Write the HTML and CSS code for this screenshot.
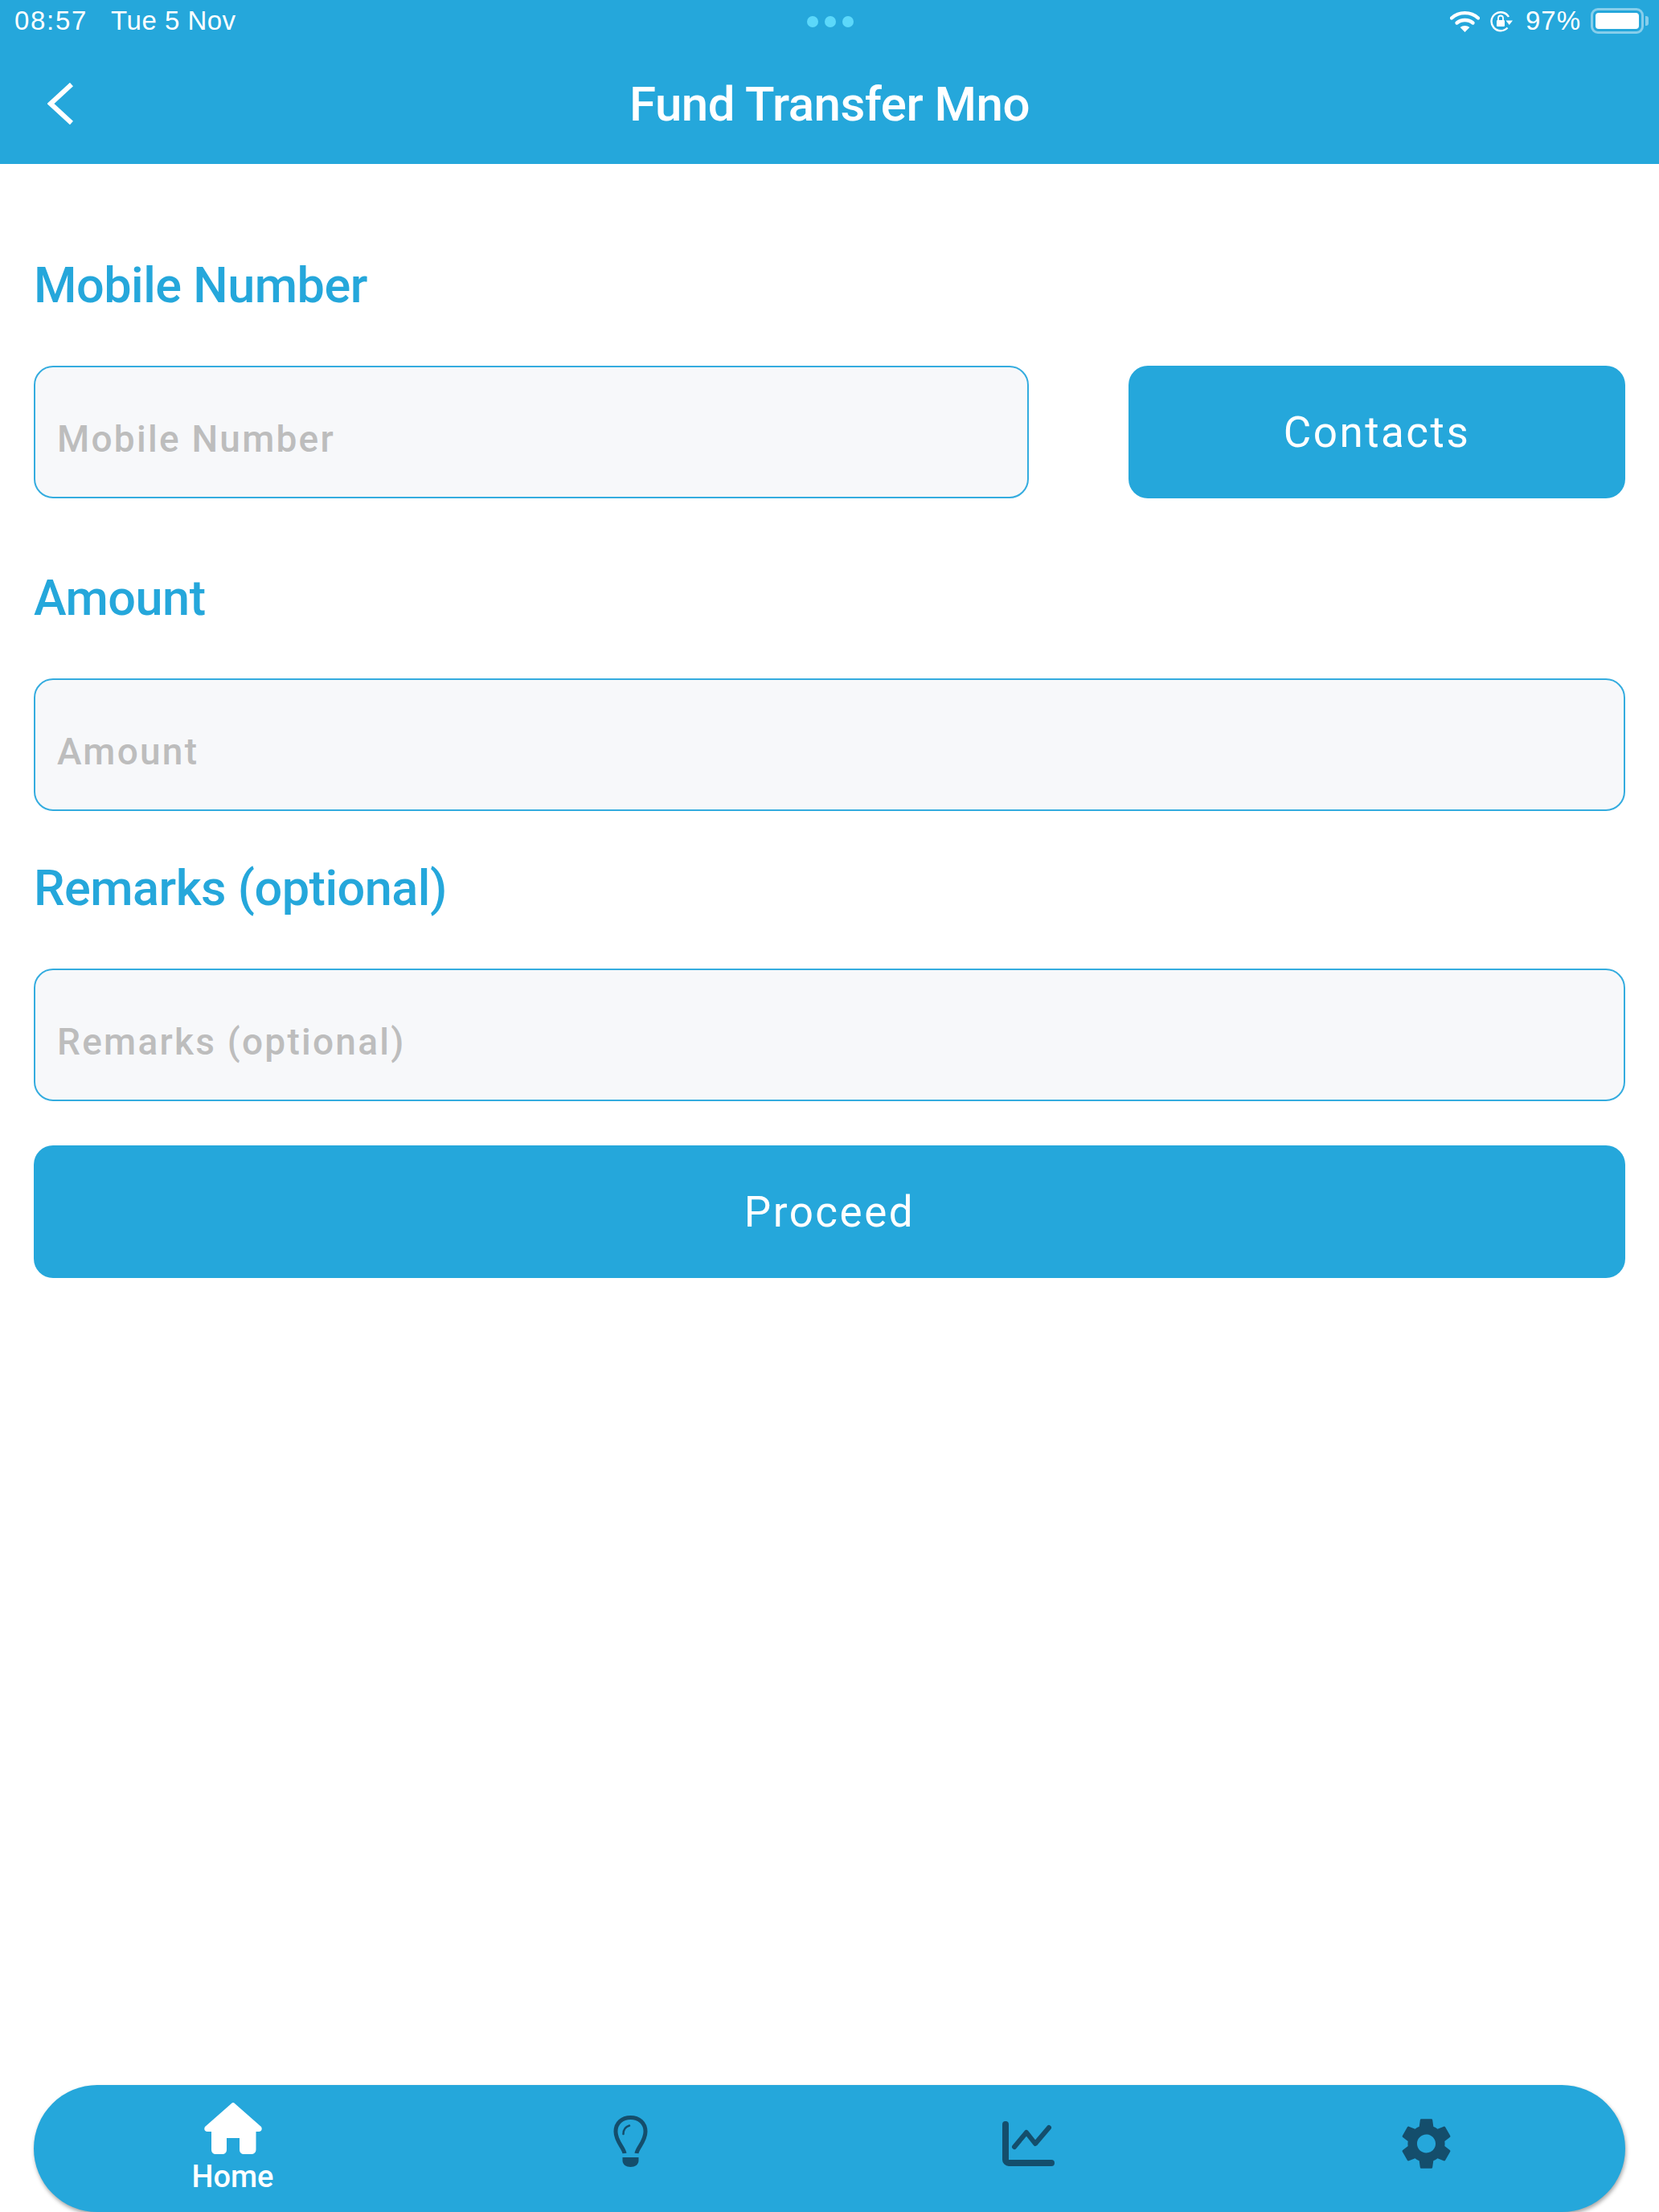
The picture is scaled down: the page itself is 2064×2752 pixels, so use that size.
FILE: index.html
```html
<!DOCTYPE html>
<html lang="en">
<head>
<meta charset="utf-8">
<title>Fund Transfer Mno</title>
<link rel="stylesheet" href="styles.css">
</head>
<body>
<div class="app">
  <header class="header">
    <div class="status">
      <div class="status-left"><span class="time">08:57</span><span class="date">Tue 5 Nov</span></div>
      <div class="dots"><i></i><i></i><i></i></div>
      <div class="status-right">
        <svg class="ic-wifi" viewBox="0 0 37 27"><path d="M2 9.5C11 1 26 1 35 9.5" fill="none" stroke="#fff" stroke-width="4.4" stroke-linecap="round"/><path d="M8.5 15.5C14 10.8 23 10.8 28.5 15.5" fill="none" stroke="#fff" stroke-width="4.4" stroke-linecap="round"/><path d="M18.5 27L12.6 21C15.8 18.2 21.2 18.2 24.4 21Z" fill="#fff"/></svg>
        <svg class="ic-rot" viewBox="0 0 28 27"><path d="M21.5 21.5A11.5 11.5 0 1 1 23 8" fill="none" stroke="#fff" stroke-width="2.4"/><path d="M19.5 12.5H28L23.7 18Z" fill="#fff"/><rect x="8" y="12" width="10" height="8" rx="1.2" fill="#fff"/><path d="M10 12V9.5a3 3 0 0 1 6 0V12" fill="none" stroke="#fff" stroke-width="1.8"/></svg>
        <span class="pct">97%</span>
        <div class="battery"><div class="battery-fill"></div></div>
        <div class="battery-nub"></div>
      </div>
    </div>
    <div class="titlebar">
      <svg class="ic-back" viewBox="0 0 32 52"><path d="M30 2L4 26L30 50" fill="none" stroke="#fff" stroke-width="6"/></svg>
      <h1 class="title">Fund Transfer Mno</h1>
    </div>
  </header>

  <main class="form">
    <section class="field field-first">
      <h2 class="label">Mobile Number</h2>
      <div class="row">
        <div class="input input-grow">Mobile Number</div>
        <button class="btn btn-contacts">Contacts</button>
      </div>
    </section>
    <section class="field">
      <h2 class="label">Amount</h2>
      <div class="input">Amount</div>
    </section>
    <section class="field field-last">
      <h2 class="label">Remarks (optional)</h2>
      <div class="input">Remarks (optional)</div>
    </section>
    <button class="btn btn-proceed">Proceed</button>
  </main>

  <nav class="nav">
    <div class="nav-item">
      <svg class="ic-home" viewBox="0 0 72 64"><path d="M36 0C37 0 38 .6 38.6 1.5L71 30C72.800 33 71 36 68 36H64.500V58C64.500 62 62 64 58 64H50C46 64 44 62 44 58V44H28V58C28 62 26 64 22 64H15C11 64 9 62 9 58V36H4C1 36-.8 33 1 30L33.400 1.500C34 .6 35 0 36 0Z" fill="#fff"/></svg>
      <span class="nav-label">Home</span>
    </div>
    <div class="nav-item">
      <svg class="ic-bulb" viewBox="0 0 43 64"><path d="M14 47C13 40 3 32 3 20C3 9 11 2.500 21.500 2.500S40 9 40 20C40 32 30 40 29 47" fill="none" stroke="#144E6C" stroke-width="5"/><path d="M12.500 23C12.500 18 15 14 20 12.500" fill="none" stroke="#144E6C" stroke-width="2.500" stroke-linecap="round"/><path d="M11.500 52H31.500V56C31.500 61 27 64 21.500 64S11.500 61 11.500 56Z" fill="#144E6C"/></svg>
    </div>
    <div class="nav-item">
      <svg class="ic-chart" viewBox="0 0 65 56"><path d="M4 4V48C4 50 6 52 8 52H61" fill="none" stroke="#144E6C" stroke-width="8" stroke-linecap="round"/><path d="M15 32L30 14L41 28L58 8" fill="none" stroke="#144E6C" stroke-width="6" stroke-linecap="round" stroke-linejoin="round"/></svg>
    </div>
    <div class="nav-item">
      <svg class="ic-gear" viewBox="2.600 2 18.800 20"><path fill="#144E6C" d="M19.140 12.940c.04-.3.06-.61.06-.94 0-.32-.02-.64-.07-.94l2.030-1.580c.18-.14.23-.41.12-.61l-1.920-3.320c-.12-.22-.37-.29-.59-.22l-2.390.96c-.5-.38-1.030-.7-1.620-.94l-.36-2.540c-.04-.24-.24-.41-.48-.41h-3.840c-.24 0-.43.17-.47.41l-.36 2.540c-.59.24-1.130.57-1.620.94l-2.390-.96c-.22-.08-.47 0-.59.22L2.740 8.870c-.12.21-.08.47.12.61l2.030 1.580c-.05.3-.09.63-.09.94s.02.64.07.94l-2.030 1.580c-.18.14-.23.41-.12.61l1.920 3.320c.12.22.37.29.59.22l2.390-.96c.5.38 1.030.7 1.620.94l.36 2.540c.05.24.24.41.48.41h3.840c.24 0 .44-.17.47-.41l.36-2.540c.59-.24 1.130-.56 1.620-.94l2.390.96c.22.08.47 0 .59-.22l1.920-3.320c.12-.22.07-.47-.12-.61l-2.010-1.580zM12 15.600c-1.980 0-3.600-1.620-3.600-3.600s1.620-3.600 3.600-3.600 3.600 1.620 3.600 3.600-1.620 3.600-3.600 3.600z"/></svg>
    </div>
  </nav>
</div>
</body>
</html>
```
FILE: styles.css
```css
* { box-sizing: border-box; }
html, body { margin: 0; padding: 0; background: #fff; }
.app {
  width: 2064px;
  height: 2752px;
  display: flex;
  flex-direction: column;
  overflow: hidden;
  font-family: Roboto, "Liberation Sans", sans-serif;
}
.header {
  height: 204px;
  background: #25A7DB;
  color: #fff;
  display: flex;
  flex-direction: column;
}
.status {
  height: 52px;
  padding: 0 13px 0 18px;
  display: flex;
  align-items: center;
  justify-content: space-between;
  font-family: "Liberation Sans", Arial, sans-serif;
  font-size: 33px;
  position: relative;
}
.status-left { display: flex; gap: 29px; }
.time { letter-spacing: 1.7px; }
.date { letter-spacing: .5px; }
.dots { display: flex; gap: 8px; position: absolute; left: 1004px; top: 20px; }
.dots i { width: 14px; height: 14px; border-radius: 50%; background: #5CD8FA; display: block; }
.status-right { display: flex; align-items: center; }
.ic-wifi { width: 37px; height: 27px; margin-right: 13px; }
.ic-rot { width: 28px; height: 27px; margin-right: 16px; }
.pct { margin-right: 12px; letter-spacing: 1px; }
.battery {
  width: 66px;
  height: 32px;
  border: 3px solid rgba(255,255,255,.45);
  border-radius: 9px;
  padding: 3px;
}
.battery-fill { width: 100%; height: 100%; background: #fff; border-radius: 4px; }
.battery-nub { width: 4px; height: 12px; margin-left: 2px; background: rgba(255,255,255,.45); border-radius: 0 3px 3px 0; }

.titlebar {
  flex: 1;
  position: relative;
  display: flex;
  align-items: center;
  justify-content: center;
  padding-top: 3px;
}
.ic-back { position: absolute; left: 59px; top: 51px; width: 32px; height: 52px; }
.title { margin: 0; font-size: 60px; font-weight: 500; letter-spacing: -0.5px; }

.form { padding: 111px 42px 0; display: flex; flex-direction: column; }
.field { margin-bottom: 56px; }
.field-first { margin-bottom: 84px; }
.field-last { margin-bottom: 55px; }
.label {
  margin: 0 0 60px;
  height: 80px;
  line-height: 80px;
  font-size: 61.2px;
  font-weight: 500;
  color: #25A7DB;
  letter-spacing: -0.5px;
}
.row { display: flex; gap: 124px; }
.input {
  height: 165px;
  background: #F7F8FA;
  border: 2.5px solid #34ACDF;
  border-radius: 24px;
  padding: 16px 27px 0;
  display: flex;
  align-items: center;
  color: #BDBDBD;
  font-size: 46px;
  font-weight: 500;
  letter-spacing: 2.25px;
}
.input-grow { flex: 1; }
.btn {
  height: 165px;
  border: 0;
  border-radius: 24px;
  background: #25A7DB;
  color: #fff;
  font-family: Roboto, "Liberation Sans", sans-serif;
  font-size: 53px;
  letter-spacing: 2.5px;
  padding: 0;
}
.btn-contacts { width: 618px; }
.btn-proceed { width: 100%; }

.nav {
  margin: auto 42px 0 42px;
  height: 158px;
  flex: none;
  background: #25A7DB;
  border-radius: 79px;
  box-shadow: 1px 3px 5px rgba(0,0,0,.35);
  display: grid;
  grid-template-columns: repeat(4, 1fr);
}
.nav-item { display: flex; flex-direction: column; align-items: center; }
.nav-label { color: #fff; font-family: Roboto, sans-serif; font-weight: 500; font-size: 38px; line-height: 40px; margin-top: 8px; }
.ic-home { width: 72px; height: 64px; margin-top: 22px; }
.ic-bulb { width: 43px; height: 64px; margin-top: 38px; }
.ic-chart { width: 65px; height: 56px; margin-top: 45px; }
.ic-gear { width: 61px; height: 64px; margin-top: 41px; }
```
